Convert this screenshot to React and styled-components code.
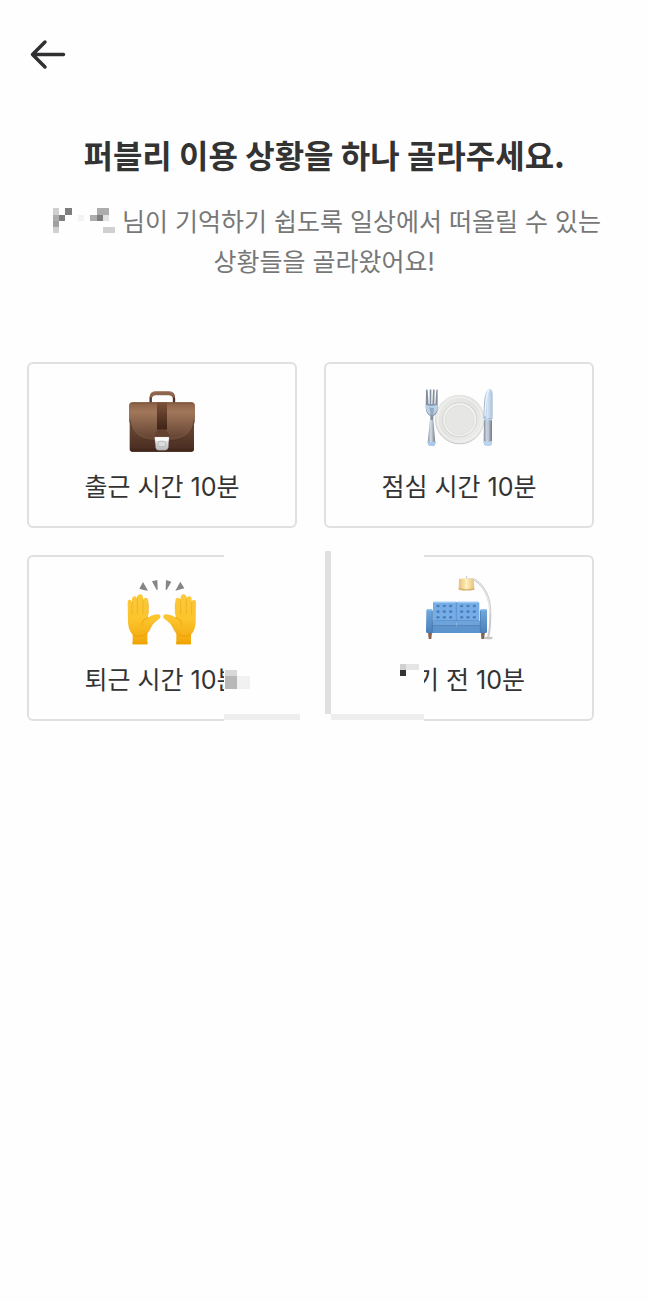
import React from "react";
import styled, { createGlobalStyle } from "styled-components";

const GlobalStyle = createGlobalStyle`
  * { box-sizing: border-box; }
  body {
    margin: 0;
    background: #fefefe;
    color: #333;
    font-family: Inter, "Noto Sans CJK KR", sans-serif;
    word-break: keep-all;
  }
`;

const Page = styled.div`
  min-height: 100vh;
  display: flex;
  flex-direction: column;
`;

const TopBar = styled.header`
  display: flex;
  padding: 36px 28px 0;
`;

const BackButton = styled.button`
  display: flex;
  padding: 0;
  border: 0;
  background: none;
  color: #303033;
  cursor: pointer;
`;

const Intro = styled.section`
  padding: 56px 28px 0;
  text-align: center;
`;

const Title = styled.h1`
  margin: 0;
  font-family: "Noto Sans CJK KR", sans-serif;
  font-size: 32px;
  line-height: 48px;
  font-weight: 700;
`;

const Description = styled.p`
  margin: 24px 0 0;
  font-size: 25px;
  line-height: 40px;
  color: #777;
`;

const HiddenName = styled.svg`
  display: inline-block;
  vertical-align: -3px;
`;

const Options = styled.div`
  display: grid;
  grid-template-columns: 1fr 1fr;
  gap: 27px;
  padding: 80px 54px 40px 27px;
`;

const OptionCard = styled.button`
  position: relative;
  display: flex;
  flex-direction: column;
  align-items: center;
  gap: 7px;
  min-height: 166px;
  padding: 16px 0;
  border: 2px solid #e0e0e0;
  border-radius: 6px;
  background: #fefefe;
  color: #333;
  font: inherit;
  cursor: pointer;
  z-index: ${(p) => (p.$raised ? 1 : 0)};
`;

const Label = styled.span`
  font-size: 25px;
  line-height: 40px;
  white-space: nowrap;
`;

const Mosaic = styled.svg`
  position: absolute;
  top: -7px;
  left: calc(50% + 62px);
  pointer-events: none;
`;

const Picture = ({ box, children }) => (
  <svg width="100" height="80" viewBox={box} aria-hidden="true">
    {children}
  </svg>
);

const Briefcase = () => (
  <Picture box="6 0 300 240">
    <defs>
      <linearGradient id="bagBody" x1="0" y1="0" x2="0" y2="1">
        <stop offset="0" stopColor="#765342" />
        <stop offset=".6" stopColor="#60402f" />
        <stop offset="1" stopColor="#472b20" />
      </linearGradient>
      <linearGradient id="bagFlap" x1="0" y1="0" x2="0" y2="1">
        <stop offset="0" stopColor="#8a6147" />
        <stop offset=".25" stopColor="#a1775a" />
        <stop offset="1" stopColor="#5f3f30" />
      </linearGradient>
      <linearGradient id="bagStrap" x1="0" y1="0" x2="0" y2="1">
        <stop offset="0" stopColor="#7b5137" />
        <stop offset="1" stopColor="#3e2317" />
      </linearGradient>
      <linearGradient id="bagLock" x1="0" y1="0" x2="0" y2="1">
        <stop offset="0" stopColor="#f7f7f7" />
        <stop offset="1" stopColor="#b9b9bb" />
      </linearGradient>
    </defs>
    <path d="M122 68V55q0-15 15-15h38q17 0 17 15v13" fill="none" stroke="#4a3027" strokeWidth="7" />
    <path d="M119 53q0-19 18-19h39q19 0 19 19l-8-1q-2-6-10-6h-40q-9 0-10 6z" fill="#8c634b" />
    <path d="M126 38q5-3 12-3h38q8 0 12 4" fill="none" stroke="#b08a70" strokeWidth="2" />
    <rect x="59" y="69" width="193" height="146" rx="8" fill="url(#bagBody)" />
    <path d="M60 206q1 9 8 9h176q7 0 8-9z" fill="#43281e" />
    <path d="M57 77q1-10 10-10h178q9 0 10 10v38q-5 67-77 67h-47q-68 0-74-67z" fill="url(#bagFlap)" />
    <path d="M59 120q9 62 72 62h47q67 0 75-62" fill="none" stroke="#4b2f23" strokeWidth="2" />
    <path d="M62 116q8 60 70 60h46q65 0 72-60" fill="none" stroke="#855d47" strokeWidth="2" opacity=".6" />
    <path d="M64 69h184" stroke="#765039" strokeWidth="3" />
    <path d="M141 67h30v82h-30z" fill="url(#bagStrap)" />
    <path d="M134 174v-8q4-16 21-18q18 2 22 18v8z" fill="#654130" />
    <path d="M134 171h43l-2 31q-2 9-10 9h-19q-8 0-9-9z" fill="url(#bagLock)" stroke="#8e8581" strokeWidth="1" />
    <path d="M135 172h41v10h-41z" fill="#fafafa" />
    <rect x="144" y="184" width="23" height="16" rx="6" fill="#deddde" stroke="#aaa8aa" strokeWidth="2" />
  </Picture>
);

const PlateAndCutlery = () => (
  <Picture box="-3 0 300 240">
    <defs>
      <linearGradient id="handle" x1="0" y1="0" x2="1" y2="0">
        <stop offset="0" stopColor="#808a96" />
        <stop offset=".4" stopColor="#d5dee9" />
        <stop offset="1" stopColor="#737b86" />
      </linearGradient>
      <linearGradient id="plate" x1="0" y1="0" x2="1" y2="1">
        <stop offset="0" stopColor="#ebebea" />
        <stop offset=".5" stopColor="#e2e2e1" />
        <stop offset="1" stopColor="#f0f0ef" />
      </linearGradient>
      <linearGradient id="blade" x1="0" y1="0" x2="1" y2="0">
        <stop offset="0" stopColor="#97abc2" />
        <stop offset=".4" stopColor="#d7e7f8" />
        <stop offset="1" stopColor="#a9bfd6" />
      </linearGradient>
    </defs>
    <circle cx="149" cy="119" r="74" fill="#cacac9" />
    <circle cx="149" cy="117" r="73" fill="url(#plate)" />
    <circle cx="149" cy="118" r="66" fill="none" stroke="#f0f0ef" strokeWidth="4" />
    <circle cx="149" cy="119" r="51" fill="#f3f3f2" stroke="#c7c7c6" strokeWidth="2" />
    <circle cx="149" cy="120" r="44" fill="#e6e6e5" stroke="#dadad9" strokeWidth="2" />
    <path d="M61 108h8l7 80q0 10-11 10t-12-10z" fill="url(#handle)" />
    <path d="M54 184q11 6 22 0v5q0 9-11 9t-11-9z" fill="#a9c9ed" />
    <path d="M48 31q3-7 5 0l3 42h3l0-43q3-5 5 0v43h3l2-43q3-5 5 0l-1 43h3l3-42q3-6 4 0v52q0 18-13 25l-1 12h-7l-1-12q-13-7-14-25z" fill="#838f9e" />
    <path d="M48 75q14 5 34 0v10q-1 14-14 21h-6q-13-7-14-21z" fill="#b9d2ec" />
    <path d="M58 81q7 4 14 2l-2 29h-7z" fill="#8796a7" opacity=".65" />
    <path d="M239 27q9 0 9 18v71h-27q-1-63 8-81q4-8 10-8z" fill="url(#blade)" />
    <path d="M238 31q-11 6-13 78" fill="none" stroke="#e9f4ff" strokeWidth="4" />
    <path d="M222 114h24v75q-1 9-12 9t-13-9z" fill="url(#handle)" />
    <path d="M222 114q12 6 24 0v7h-24zM222 183q12 5 24 0v7q-2 8-12 8t-12-8z" fill="#b9d5f2" />
    <path d="M234 124v56" stroke="#bac8d9" strokeWidth="5" />
  </Picture>
);

const Hand = () => (
  <>
    <path
      d="M68 223v-29q-13-12-14-38L53 98q0-9 6-9q6 0 7 9V88q1-9 8-9q7 0 7 9v-7q2-8 9-8q8 0 9 9v9q1-8 8-8q8 0 8 11l-1 49q8-7 20-9q14-3 17 3q2 7-8 13q-14 10-21 22q-6 10-10 17v34z"
      fill="url(#skin)"
    />
    <path
      d="M66 96v36M82 86v44M99 88v43M115 101v31"
      fill="none"
      stroke="#eda91a"
      strokeWidth="2"
      strokeLinecap="round"
    />
    <path
      d="M70 194q17 10 38-2q11-8 15-25M114 143q-18 6-18 22"
      fill="none"
      stroke="#e99c00"
      strokeWidth="4"
      strokeLinecap="round"
      opacity=".5"
    />
    <path d="M68 215q22 5 44 0v8H68z" fill="#eda300" />
  </>
);

const RaisedHands = () => (
  <Picture box="6 9 300 240">
    <defs>
      <linearGradient id="skin" x1="0" y1="0" x2="0" y2="1">
        <stop offset="0" stopColor="#fbc93a" />
        <stop offset=".5" stopColor="#fcc42c" />
        <stop offset="1" stopColor="#f1a509" />
      </linearGradient>
    </defs>
    <Hand />
    <g transform="translate(311 0) scale(-1 1)">
      <Hand />
    </g>
    <g fill="#858585">
      <path d="M99 36l15 26q-14-2-26-6zM126 34l16-4 1 29-3 1zM168 30l16 5-14 25-3-1zM211 35l12 20-27 7z" />
    </g>
  </Picture>
);

const tufts = [84, 103, 122, 155, 174, 193];

const SofaAndLamp = () => (
  <Picture box="-3 9 300 240">
    <defs>
      <linearGradient id="shade" x1="0" y1="0" x2="1" y2="0">
        <stop offset="0" stopColor="#e8be78" />
        <stop offset=".5" stopColor="#fff0bc" />
        <stop offset="1" stopColor="#e9c078" />
      </linearGradient>
      <linearGradient id="sofaArm" x1="0" y1="0" x2="0" y2="1">
        <stop offset="0" stopColor="#6fa9df" />
        <stop offset="1" stopColor="#4c7eb8" />
      </linearGradient>
    </defs>
    <ellipse cx="235" cy="204" rx="14" ry="4" fill="#c5c6c8" />
    <path d="M171 30q18-9 36 9q34 32 34 91q0 51-7 72" fill="none" stroke="#c9cbd0" strokeWidth="6" />
    <path d="M171 29q19-8 36 9q33 33 33 92" fill="none" stroke="#ececed" strokeWidth="3" />
    <path d="M170 19v9" stroke="#bbb" strokeWidth="3" />
    <path d="M147 27q22-4 44 0l2 31q-23 6-47 0z" fill="url(#shade)" />
    <path d="M146 55q24 5 47 0v4q-24 5-47 0z" fill="#d8b16f" />
    <path d="M54 187h12l-2 20h-8zM213 187h12l-3 20h-8z" fill="#87634e" />
    <path d="M72 95h65q3 0 3 4v56H69V99q0-4 3-4zM143 95h61q4 0 4 5v55h-68V98q0-3 3-3z" fill="#76ade6" />
    <path d="M72 97h65M143 97h62" stroke="#a5d2fb" strokeWidth="3" />
    <g fill="#4a7fbb">
      {[108, 125, 142].map((y) =>
        tufts.map((x) => <ellipse key={`${x}-${y}`} cx={x} cy={y} rx="5" ry="4" />)
      )}
    </g>
    <path d="M139 97v69M71 152h136" stroke="#5285bd" strokeWidth="2" />
    <path d="M65 153h73v17H65zM140 153h74v17h-74z" fill="#6ca3db" />
    <path d="M66 168h147" stroke="#3c6ba2" strokeWidth="3" />
    <path d="M65 170h149v19H65z" fill="#5c94ce" />
    <path d="M49 122q0-4 4-4h11q4 0 4 4v67H52q-4 0-4-4zM210 122q0-4 4-4h13q4 0 4 4v63q0 4-4 4h-17z" fill="url(#sofaArm)" />
    <path d="M52 120h13M213 120h14" stroke="#91c4f1" strokeWidth="3" />
    <path d="M67 123v65M211 123v65" stroke="#4475a9" strokeWidth="2" />
  </Picture>
);

const CardMosaic = () => (
  <Mosaic width="200" height="174" viewBox="224 550 200 174" aria-hidden="true" shapeRendering="crispEdges">
    <rect x="224" y="550" width="200" height="174" fill="#fefefe" />
    <path d="M325 551h6v163h-6z" fill="#e0e0e0" />
    <path d="M224 714h76v6h-76zM331 714h93v6h-93z" fill="#eee" />
    <path d="M225 670h12v6h-12z" fill="#d8d8d8" />
    <path d="M225 676h12v13h-12z" fill="#b8b8b8" />
    <path d="M237 676h13v13h-13z" fill="#f1f1f1" />
    <path d="M400 664h6v6h-6z" fill="#d0d0d0" />
    <path d="M406 664h13v6h-13z" fill="#e5e5e5" />
    <path d="M400 670h6v6h-6z" fill="#333" />
  </Mosaic>
);

const options = [
  { label: "출근 시간 10분", Art: Briefcase },
  { label: "점심 시간 10분", Art: PlateAndCutlery },
  { label: "퇴근 시간 10분", Art: RaisedHands, mosaic: true },
  { label: "자기 전 10분", Art: SofaAndLamp },
];

export default function App() {
  return (
    <Page>
      <GlobalStyle />
      <TopBar>
        <BackButton type="button" aria-label="뒤로">
          <svg width="40" height="38" viewBox="0 0 40 38" fill="none" stroke="currentColor" strokeWidth="3.5" strokeLinecap="round" strokeLinejoin="round">
            <path d="M35.500 18.500H4.500M17 6L4.500 18.500L17 31" />
          </svg>
        </BackButton>
      </TopBar>
      <main>
        <Intro>
          <Title>퍼블리 이용 상황을 하나 골라주세요.</Title>
          <Description>
            <HiddenName width="68" height="26" viewBox="44 207 68 26" aria-hidden="true" shapeRendering="crispEdges">
              <path d="M50 207h6v7h-6zM50 226h6v6h-6zM100 226h12v6h-12z" fill="#d0d0d0" />
              <path d="M62 207h7v7h-7zM56 214h6v6h-6zM94 214h6v6h-6z" fill="#7e7e7e" />
              <path d="M50 214h6v6h-6zM94 207h12v7h-12zM87 214h7v6h-7z" fill="#adadad" />
              <path d="M50 220h6v6h-6z" fill="#a0a0a0" />
              <path d="M100 214h6v6h-6z" fill="#e3e3e3" />
              <path d="M75 214h6v6h-6z" fill="#f3f3f3" />
            </HiddenName>{" "}
            님이 기억하기 쉽도록 일상에서 떠올릴 수 있는 상황들을 골라왔어요!
          </Description>
        </Intro>
        <Options>
          {options.map(({ label, Art, mosaic }) => (
            <OptionCard key={label} type="button" $raised={mosaic}>
              <Art />
              <Label>{label}</Label>
              {mosaic && <CardMosaic />}
            </OptionCard>
          ))}
        </Options>
      </main>
    </Page>
  );
}
